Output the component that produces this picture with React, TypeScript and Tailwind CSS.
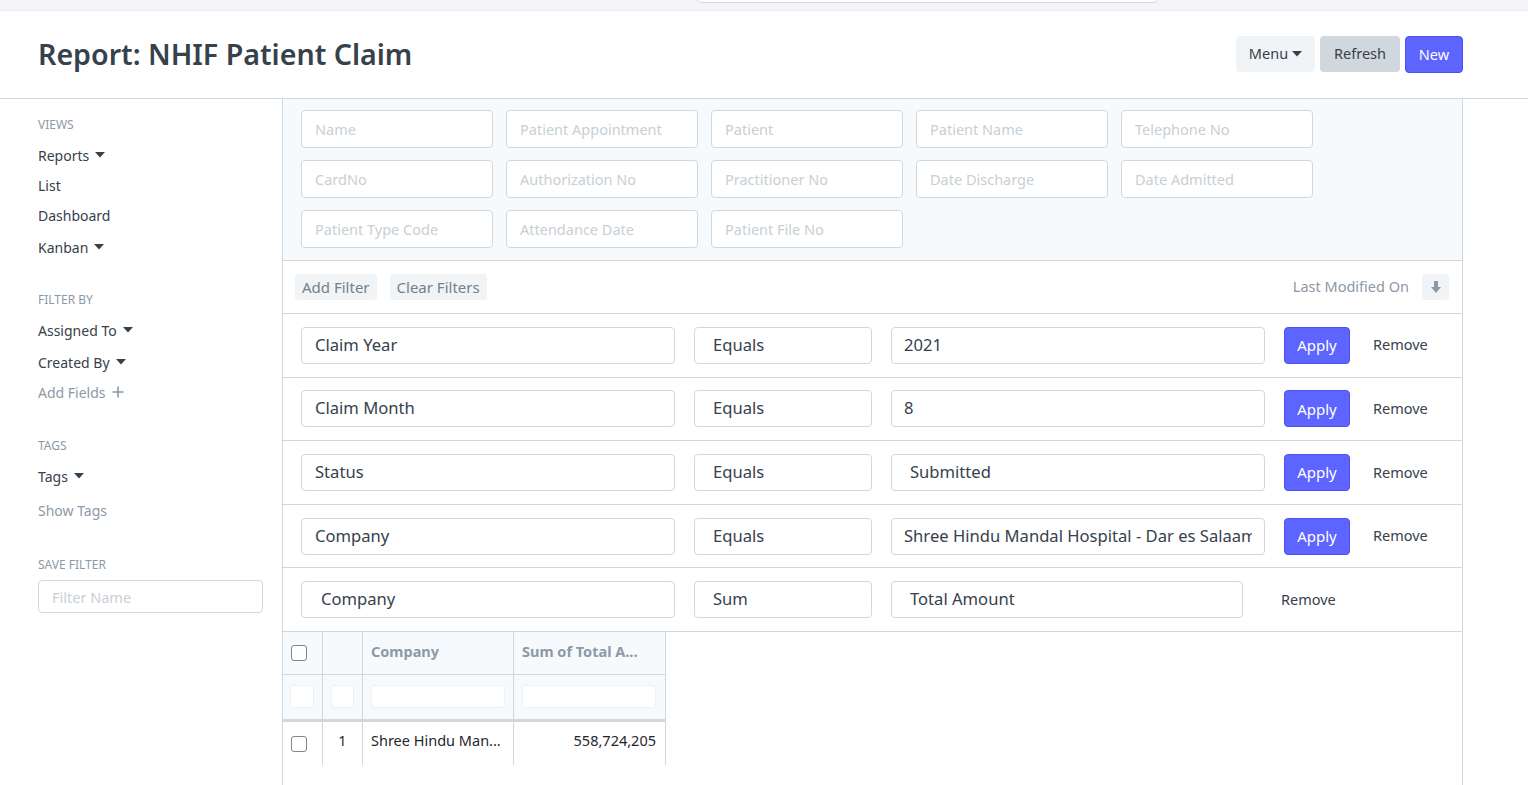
import React from 'react'

const Caret = ({ className = '' }: { className?: string }) => (
  <svg width="10" height="6" viewBox="0 0 10 6" className={className}>
    <path d="M0 0 L10 0 L5 5.5 Z" fill="currentColor" />
  </svg>
)

const placeholders = [
  'Name',
  'Patient Appointment',
  'Patient',
  'Patient Name',
  'Telephone No',
  'CardNo',
  'Authorization No',
  'Practitioner No',
  'Date Discharge',
  'Date Admitted',
  'Patient Type Code',
  'Attendance Date',
  'Patient File No',
]

interface FilterRow {
  field: string
  cond: string
  value: string
  valuePad?: string
  fieldPad?: string
  apply: boolean
}

const filters: FilterRow[] = [
  { field: 'Claim Year', cond: 'Equals', value: '2021', apply: true },
  { field: 'Claim Month', cond: 'Equals', value: '8', apply: true },
  { field: 'Status', cond: 'Equals', value: 'Submitted', valuePad: 'pl-[18px]', apply: true },
  { field: 'Company', cond: 'Equals', value: 'Shree Hindu Mandal Hospital - Dar es Salaam', apply: true },
  { field: 'Company', cond: 'Sum', value: 'Total Amount', valuePad: 'pl-[18px]', fieldPad: 'pl-[19px]', apply: false },
]

const Checkbox = () => (
  <div className="w-[16px] h-[16px] rounded-[3px] border-[1.5px] border-[#7c848c] bg-white" />
)

const SideLabel = ({ children, className = '' }: { children: React.ReactNode; className?: string }) => (
  <div className={`text-[12px] leading-[18px] uppercase text-[#8d99a6] ${className}`}>{children}</div>
)

const SideItem = ({ children, caret, muted, className = '' }: { children: React.ReactNode; caret?: boolean; muted?: boolean; className?: string }) => (
  <div className={`h-[30px] flex items-center gap-[6px] text-[14px] ${muted ? 'text-[#8d99a6]' : 'text-[#36414c]'} ${className}`}>
    <span>{children}</span>
    {caret && <Caret className="text-[#36414c]" />}
  </div>
)

export default function App() {
  return (
    <div className="min-h-screen bg-white text-[#36414c] font-['Noto_Sans',sans-serif]">
      {/* navbar remnant */}
      <div className="h-[11px] overflow-hidden bg-[#f4f5f8] border-b border-[#e8ebee] pl-[696px]">
        <div className="w-[463px] h-[34px] -mt-[31px] rounded-md border border-[#d1d8dd] bg-white" />
      </div>

      {/* page head */}
      <div className="h-[88px] flex items-center justify-between pl-[38px] pr-[65px] border-b border-[#d1d8dd]">
        <h1 className="text-[28.6px] font-semibold text-[#36414c]">Report: NHIF Patient Claim</h1>
        <div className="flex gap-[5px]">
          <button className="h-[36px] w-[79px] rounded-[4px] bg-[#f0f4f7] text-[14.5px] text-[#36414c] flex items-center justify-center gap-[4px]">
            Menu <Caret />
          </button>
          <button className="h-[36px] w-[80px] rounded-[4px] bg-[#d1d8dd] text-[14.5px] text-[#36414c]">Refresh</button>
          <button className="h-[37px] w-[58px] rounded-[4px] bg-[#5e64ff] border border-[#4b51f0] text-[14.5px] text-white">New</button>
        </div>
      </div>

      <div className="flex">
        {/* sidebar */}
        <aside className="w-[282px] shrink-0 pl-[38px] pr-[19px] pt-[17px]">
          <SideLabel>Views</SideLabel>
          <div className="mt-[6px]">
            <SideItem caret>Reports</SideItem>
            <SideItem>List</SideItem>
            <SideItem>Dashboard</SideItem>
            <SideItem caret className="mt-[2px]">Kanban</SideItem>
          </div>
          <SideLabel className="mt-[29px]">Filter By</SideLabel>
          <div className="mt-[6px]">
            <SideItem caret>Assigned To</SideItem>
            <SideItem caret className="mt-[2px]">Created By</SideItem>
            <div className="h-[30px] flex items-center gap-[6px] text-[14px] text-[#8d99a6]">
              <span>Add Fields</span>
              <svg width="12" height="12" viewBox="0 0 12 12">
                <path d="M6 0.5 V11.5 M0.5 6 H11.5" stroke="currentColor" strokeWidth="1.6" />
              </svg>
            </div>
          </div>
          <SideLabel className="mt-[30px]">Tags</SideLabel>
          <div className="mt-[6px]">
            <SideItem caret>Tags</SideItem>
            <SideItem muted className="mt-[4px]">Show Tags</SideItem>
          </div>
          <SideLabel className="mt-[31px]">Save Filter</SideLabel>
          <input
            placeholder="Filter Name"
            className="mt-[6px] w-[225px] h-[33px] rounded-[4px] border border-[#d1d8dd] pl-[13px] text-[14.5px] placeholder:text-[#c8cfd5] outline-none"
          />
        </aside>

        {/* main */}
        <main className="w-[1181px] min-h-[686px] border-l border-r border-[#d1d8dd]">
          {/* standard filters */}
          <div className="bg-[#f7fafc] border-b border-[#d1d8dd] pt-[11px] pb-[12px] pl-[18px]">
            <div className="grid grid-cols-[repeat(5,192px)] gap-x-[13px] gap-y-[12px]">
              {placeholders.map((p) => (
                <input
                  key={p}
                  placeholder={p}
                  className="h-[38px] rounded-[4px] border border-[#d1d8dd] bg-white pl-[13px] text-[14.5px] placeholder:text-[#c8cfd5] outline-none"
                />
              ))}
            </div>
          </div>

          {/* filter toolbar */}
          <div className="h-[53px] flex items-center justify-between pl-[12px] pr-[13px] border-b border-[#d1d8dd]">
            <div className="flex gap-[13px]">
              <button className="h-[26px] px-[7px] rounded-[3px] bg-[#f0f4f7] text-[15px] text-[#74808b]">Add Filter</button>
              <button className="h-[26px] px-[7px] rounded-[3px] bg-[#f0f4f7] text-[15px] text-[#74808b]">Clear Filters</button>
            </div>
            <div className="flex items-center gap-[13px]">
              <span className="text-[14.5px] text-[#8d99a6]">Last Modified On</span>
              <button className="w-[27px] h-[26px] rounded-[3px] bg-[#f0f4f7] flex items-center justify-center text-[#8d99a6]">
                <svg width="10" height="12" viewBox="0 0 10 12">
                  <path d="M3 0 H7 V6 H10 L5 12 L0 6 H3 Z" fill="currentColor" />
                </svg>
              </button>
            </div>
          </div>

          {/* filter rows */}
          {filters.map((f, i) => (
            <div key={i} className="h-[63.6px] flex items-center pl-[18px] border-b border-[#d1d8dd] text-[16.6px]">
              <div className={`w-[374px] h-[37px] flex items-center rounded-[4px] border border-[#d1d8dd] ${f.fieldPad ?? 'pl-[13px]'}`}>
                {f.field}
              </div>
              <div className="ml-[19px] w-[178px] h-[37px] flex items-center rounded-[4px] border border-[#d1d8dd] pl-[18px]">
                {f.cond}
              </div>
              <div
                className={`ml-[19px] ${f.apply ? 'w-[374px]' : 'w-[352px]'} h-[37px] flex items-center rounded-[4px] border border-[#d1d8dd] ${f.valuePad ?? 'pl-[12px]'} pr-[12px]`}
              >
                <span className="overflow-hidden whitespace-nowrap">{f.value}</span>
              </div>
              {f.apply ? (
                <>
                  <button className="ml-[19px] w-[66px] h-[37px] rounded-[4px] bg-[#5e64ff] border border-[#4b51f0] text-[15px] text-white">Apply</button>
                  <span className="ml-[23px] text-[14.5px]">Remove</span>
                </>
              ) : (
                <span className="ml-[38px] text-[14.5px]">Remove</span>
              )}
            </div>
          ))}

          {/* datatable */}
          <div className="w-[383px] text-[14.5px]">
            <div className="flex h-[43px] bg-[#f7fafc] border-b border-[#d1d8dd]">
              <div className="w-[40px] border-r border-[#d1d8dd] flex items-center pl-[8px] pt-[1px]">
                <Checkbox />
              </div>
              <div className="w-[40px] border-r border-[#d1d8dd]" />
              <div className="w-[151px] border-r border-[#d1d8dd] flex items-center pl-[8px] pb-[3px] font-bold text-[#8d99a6]">Company</div>
              <div className="w-[152px] border-r border-[#d1d8dd] flex items-center pl-[8px] pb-[3px] font-bold text-[#8d99a6] whitespace-nowrap">
                Sum of Total A...
              </div>
            </div>
            <div className="flex h-[47px] bg-[#f7fafc] border-b-[3px] border-[#d1d8dd]">
              <div className="w-[40px] border-r border-[#d1d8dd] flex items-center pl-[7px]">
                <div className="w-[24px] h-[23px] rounded-[3px] bg-white border border-[#eef1f4]" />
              </div>
              <div className="w-[40px] border-r border-[#d1d8dd] flex items-center pl-[8px]">
                <div className="w-[23px] h-[23px] rounded-[3px] bg-white border border-[#eef1f4]" />
              </div>
              <div className="w-[151px] border-r border-[#d1d8dd] flex items-center pl-[8px]">
                <div className="w-[134px] h-[23px] rounded-[3px] bg-white border border-[#eef1f4]" />
              </div>
              <div className="w-[152px] border-r border-[#d1d8dd] flex items-center pl-[8px]">
                <div className="w-[134px] h-[23px] rounded-[3px] bg-white border border-[#eef1f4]" />
              </div>
            </div>
            <div className="flex h-[43px]">
              <div className="w-[40px] border-r border-[#d1d8dd] flex items-center pl-[8px] pt-[1px]">
                <Checkbox />
              </div>
              <div className="w-[40px] border-r border-[#d1d8dd] flex items-center justify-center pb-[6px] text-[#1f272e]">1</div>
              <div className="w-[151px] border-r border-[#d1d8dd] flex items-center pl-[8px] pb-[6px] text-[#1f272e] whitespace-nowrap">Shree Hindu Man...</div>
              <div className="w-[152px] border-r border-[#d1d8dd] flex items-center justify-end pr-[9px] pb-[6px] text-[#1f272e]">558,724,205</div>
            </div>
          </div>
        </main>
      </div>
    </div>
  )
}
